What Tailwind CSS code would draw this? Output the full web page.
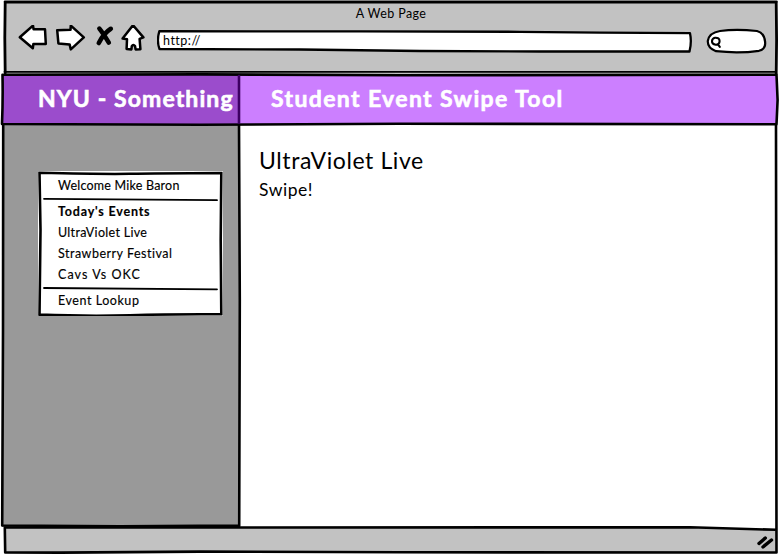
<!DOCTYPE html>
<html lang="en">
<head>
<meta charset="utf-8">
<title>A Web Page</title>
<script src="https://cdn.jsdelivr.net/npm/@tailwindcss/browser@4"></script>
</head>
<body class="bg-white">
<div class="relative flex h-[555px] w-[779px] flex-col overflow-hidden bg-white font-['Lato','Open_Sans',sans-serif] text-black">
  <header class="ml-[5px] mr-[3px] mt-[2px] h-[72px] bg-[#c2c2c2]">
    <div class="flex h-[23px] items-center justify-center pl-[1px] pt-[1px] text-[12.5px] leading-none tracking-[0.4px]"><span>A Web Page</span></div>
    <div class="flex h-[30px] items-start">
      <svg class="ml-[10px] h-[30px] w-[135px] shrink-0" viewBox="15 25 135 30" fill="#fff" stroke="#000" stroke-width="2.5" stroke-linejoin="round" stroke-linecap="round">
        <path d="M19.8 37.2 33 25.6 33.6 29.3 45 29.3 45.8 44 33.4 44 32.8 48.2Z"/>
        <path d="M57.2 30.2 70.5 29.8 70.8 25.6 83.8 37.4 70.8 49.4 69.6 44.4 58.4 43.4Z"/>
        <path d="M99.4 28.6Q103 33 108.8 42.6M110.8 28.8Q104 33 98.8 43" stroke-width="4.6"/>
        <path d="M133 25.2 143.4 37.4 139.6 38.8 140.4 49.2 135.6 49.4 135 46Q133.3 43.8 131.8 46.2L131.4 49.4 126.6 49 127 39.2 122.6 38.6Z"/>
      </svg>
      <div class="relative ml-[7px] mt-[4px] h-[25px] w-[536px] shrink-0">
        <svg class="absolute inset-0 h-[25px] w-[536px]" viewBox="157 29 536 25" fill="#fff" stroke="#000" stroke-width="2.3" stroke-linejoin="round"><path d="M159.3 31.2 360 31.4 520 31.8 600 32.6 690 33.2Q691.9 42 689.5 51.5L540 51.5 420 51 300 49.5 159.5 49Q156.5 41 159.3 31.2Z"/></svg>
        <div class="relative pl-[6px] pt-[4px] text-[12.5px] leading-[15px] tracking-[0.5px]">http://</div>
      </div>
      <svg class="ml-[12px] mt-[2px] h-[28px] w-[64px] shrink-0" viewBox="705 27 64 28" fill="#fff" stroke="#000" stroke-width="2.2" stroke-linecap="round" stroke-linejoin="round">
        <path d="M720 31Q736 28.8 757 31Q764.5 33 765.1 42Q766 49 759 50.8Q739 53.6 716 51.2Q707.5 48 707.8 41Q709 32.8 720 31Z"/>
        <path d="M715 37.8Q719.5 37.5 719.6 41Q719.5 44.8 715.8 44.8Q711.8 44.2 712 41Q712.3 38.4 715 37.8ZM717.8 44.2 719.8 46.8" stroke-width="2.1"/>
      </svg>
    </div>
  </header>
  <div class="ml-[2px] mr-[2px] flex h-[51px] shrink-0 bg-[#cc7fff] text-[23px] leading-[49px] font-bold text-white [-webkit-text-stroke:0.6px_white]">
    <div class="h-[51px] w-[238px] shrink-0 bg-[#9b4ccc] pl-[36px]"><span class="whitespace-nowrap tracking-[1.1px]">NYU - Something</span></div>
    <div class="pl-[31px]"><span class="whitespace-nowrap tracking-[1.37px]">Student Event Swipe Tool</span></div>
  </div>
  <main class="ml-[2px] mr-[2px] flex h-[402px] shrink-0">
    <aside class="w-[238px] shrink-0 bg-[#999] pl-[36px] pt-[46px]">
      <nav class="relative h-[145px] w-[185px] bg-white pl-[20px] pt-[4px] text-[12.5px] leading-[21px] [-webkit-text-stroke:0.15px_black]">
        <svg class="absolute inset-0 h-[145px] w-[185px]" viewBox="38 171 185 145" fill="none" stroke="#000" stroke-linecap="round">
          <path d="M39.5 172.8Q105 174.3 130 173.8T221.3 173L220.7 240 221.3 314.3Q170 314 130 315.2T39.5 314.6L40.5 230Z" stroke-width="2.6"/>
          <path d="M44 198.8 217 200.2M44 288 217 289.3" stroke-width="1.8"/>
        </svg>
        <div class="relative flex flex-col">
          <span class="mb-[5px] tracking-[0.22px]">Welcome Mike Baron</span>
          <span class="font-bold tracking-[0.8px]">Today's Events</span>
          <span class="tracking-[0.3px]">UltraViolet Live</span>
          <span class="tracking-[0.5px]">Strawberry Festival</span>
          <span class="mb-[5px] tracking-[1.05px]">Cavs Vs OKC</span>
          <span class="tracking-[0.55px]">Event Lookup</span>
        </div>
      </nav>
    </aside>
    <section class="pl-[19px] pt-[18px]">
      <h1 class="text-[23px] leading-[34px] tracking-[0.6px]">UltraViolet Live</h1>
      <p class="pt-[2px] text-[17.5px] leading-[22px] tracking-[0.5px]">Swipe!</p>
    </section>
  </main>
  <footer class="ml-[5px] mr-[2px] h-[26px] shrink-0 bg-[#c2c2c2]"></footer>
  <svg class="pointer-events-none absolute inset-0 h-[555px] w-[779px]" viewBox="0 0 779 555" fill="none" stroke="#000" stroke-linejoin="round" stroke-linecap="round">
    <path d="M240.5 527.2H690L776 529.8V526H240.5Z" fill="#fff" stroke="none"/>
    <path d="M5 2H776.5M5.2 2 4.8 38 5.2 73M776.2 2 776.6 40 776.2 74" stroke-width="2.8"/>
    <path d="M4.5 71.8H776" stroke-width="1.8"/>
    <path d="M2.5 74.8 200 74.4 400 75.2 776.5 74.8 777.6 100 776.5 124.2 400 123.8 200 124.8 2 124Q3 100 2.5 74.8Z" stroke-width="2.6"/>
    <path d="M239 76V123" stroke="#3d0063" stroke-width="2.6"/>
    <path d="M239 125 239.8 300 239.2 526M3.2 125 3 330 2.2 525.5 120 526.2 239 525.5" stroke-width="2.6"/>
    <path d="M776 125 776.5 552.5 400 552.3 200 551.6 60 552.6 5.2 552.5 4.8 527.5 690 527.3 776 529.8" stroke-width="2.6"/>
    <path d="M759 543.5 765.3 538M763 547 771.5 540" stroke-width="3.4"/>
  </svg>
</div>
</body>
</html>
